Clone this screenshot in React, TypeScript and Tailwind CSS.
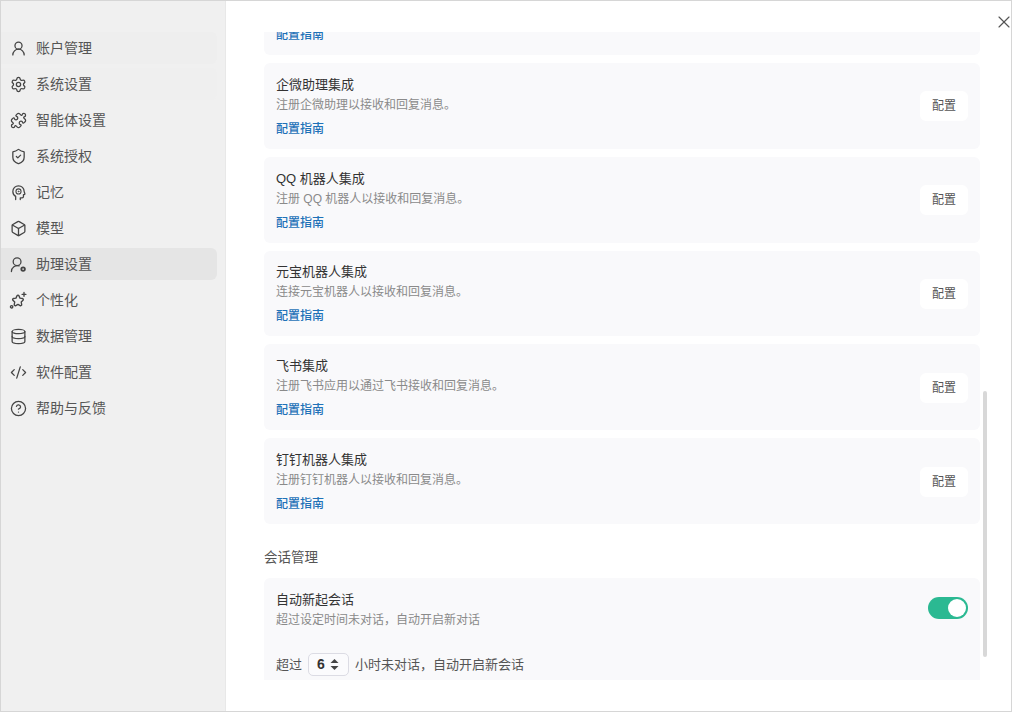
import { UserRound, Settings, Puzzle, ShieldCheck, Box, Database, CodeXml, CircleHelp, X } from 'lucide-react';

const HeadIcon = () => (
  <svg width="17" height="17" viewBox="0 0 24 24" fill="none" stroke="currentColor" strokeWidth="1.8" strokeLinecap="round" strokeLinejoin="round">
    <path d="M8 22v-4.5C5.5 16 4 13.5 4 10.5 4 6 7.6 2.5 12 2.5s8 3.5 8 8c0 .8.9 2.4 1 3.5 0 .6-.6 1-1.5 1H19v2.5a2 2 0 0 1-2 2h-2.5V22" />
    <circle cx="12" cy="10.5" r="3.6" strokeWidth="1.5" />
    <circle cx="12" cy="10.5" r="0.6" strokeWidth="1.2" />
  </svg>
);

const AssistantIcon = () => (
  <svg width="17" height="17" viewBox="0 0 24 24" fill="none" stroke="currentColor" strokeWidth="1.8" strokeLinecap="round" strokeLinejoin="round">
    <circle cx="10" cy="8" r="5.5" />
    <path d="M2 22a8.5 8.5 0 0 1 11-8" />
    <circle cx="18.5" cy="18.5" r="2.5" strokeWidth="2.6" />
  </svg>
);

const SparkIcon = () => (
  <svg width="18" height="18" viewBox="0 0 24 24" fill="none" stroke="currentColor" strokeWidth="1.8" strokeLinecap="round" strokeLinejoin="round">
    <path d="M12 5.5c.6 0 1 .4 1.3 1l1.3 3 3.3.5c1.2.2 1.6 1.5.8 2.3l-2.4 2.4.6 3.3c.2 1.2-1.1 2-2.1 1.5L12 17.8l-2.9 1.7c-1 .5-2.3-.3-2.1-1.5l.6-3.3-2.4-2.4c-.8-.8-.4-2.1.8-2.3l3.3-.5 1.3-3c.3-.6.7-1 1.4-1z" />
    <path d="M20 2v5M17.5 4.5h5" />
    <circle cx="3.5" cy="21" r="1.6" />
  </svg>
);

const nav = [
  { label: '账户管理', icon: <UserRound size={17} strokeWidth={1.8} />, bg: 'bg-[#eeeeee]' },
  { label: '系统设置', icon: <Settings size={17} strokeWidth={1.8} />, bg: 'bg-[#efefef]' },
  { label: '智能体设置', icon: <Puzzle size={17} strokeWidth={1.8} />, bg: '' },
  { label: '系统授权', icon: <ShieldCheck size={17} strokeWidth={1.8} />, bg: '' },
  { label: '记忆', icon: <HeadIcon />, bg: '' },
  { label: '模型', icon: <Box size={17} strokeWidth={1.8} />, bg: '' },
  { label: '助理设置', icon: <AssistantIcon />, bg: 'bg-[#e5e5e5]' },
  { label: '个性化', icon: <SparkIcon />, bg: '' },
  { label: '数据管理', icon: <Database size={17} strokeWidth={1.8} />, bg: '' },
  { label: '软件配置', icon: <CodeXml size={17} strokeWidth={1.8} />, bg: '' },
  { label: '帮助与反馈', icon: <CircleHelp size={17} strokeWidth={1.8} />, bg: '' },
];

const integrations = [
  { title: '企微助理集成', desc: '注册企微助理以接收和回复消息。' },
  { title: 'QQ 机器人集成', desc: '注册 QQ 机器人以接收和回复消息。' },
  { title: '元宝机器人集成', desc: '连接元宝机器人以接收和回复消息。' },
  { title: '飞书集成', desc: '注册飞书应用以通过飞书接收和回复消息。' },
  { title: '钉钉机器人集成', desc: '注册钉钉机器人以接收和回复消息。' },
];

const IntegrationCard = ({ title, desc }: { title: string; desc: string }) => (
  <div className="flex h-[85.8px] items-center justify-between rounded-md bg-[#f9f9fb] px-3">
    <div className="flex flex-col pt-[2px]">
      <div className="text-[13px] leading-[18px] text-[#333333]">{title}</div>
      <div className="mt-[2px] text-xs leading-[18px] text-[#8a8a8a]">{desc}</div>
      <a className="mt-[6px] text-xs leading-[18px] font-medium text-[#1f72b8]">配置指南</a>
    </div>
    <button className="mt-px h-[30px] w-12 rounded-md bg-white text-xs text-[#555555]">配置</button>
  </div>
);

export default function App() {
  return (
    <div
      className="relative flex h-[712px] w-[1012px] overflow-hidden border border-[#d6d6d6] bg-white"
      style={{ fontFamily: '"Liberation Sans", "Noto Sans CJK SC", sans-serif' }}
    >
      {/* Sidebar */}
      <aside className="flex w-[225px] shrink-0 flex-col gap-1 border-r border-[#e8e8e8] bg-[#f0f0f0] pt-[31px] pr-2">
        {nav.map((item) => (
          <div key={item.label} className={`flex h-8 items-center gap-[10px] rounded-r-md pl-[8px] text-sm text-[#555555] ${item.bg}`}>
            <span className="flex w-[18px] justify-center text-[#444444]">{item.icon}</span>
            <span className="-ml-px">{item.label}</span>
          </div>
        ))}
      </aside>

      {/* Content */}
      <main className="flex min-w-0 flex-1 flex-col pt-[31px] pb-[31px]">
        <div className="h-full overflow-hidden pr-[31px] pl-[38px]">
          <div className="-mt-[63px] flex flex-col gap-2">
            <div className="flex h-[86px] items-end rounded-md bg-[#f9f9fb] px-3 pb-[11px]">
              <a className="text-xs leading-[18px] font-medium text-[#1f72b8]">配置指南</a>
            </div>
            {integrations.map((item) => (
              <IntegrationCard key={item.title} {...item} />
            ))}
          </div>

          <div className="mt-[25px] text-[13.5px] leading-[18px] text-[#555555]">会话管理</div>

          <div className="mt-[11px] h-[110px] rounded-t-md bg-[#f9f9fb] px-3 pt-[13px]">
            <div className="flex items-center justify-between">
              <div>
                <div className="text-[13px] leading-[18px] text-[#333333]">自动新起会话</div>
                <div className="mt-[2px] text-xs leading-[18px] text-[#8a8a8a]">超过设定时间未对话，自动开启新对话</div>
              </div>
              <div className="-mt-[3px] flex h-[22px] w-10 items-center justify-end rounded-full bg-[#2bb992] px-[2px]">
                <span className="size-[18px] rounded-full bg-white" />
              </div>
            </div>
            <div className="mt-[24px] flex items-center text-[13px] text-[#555555]">
              <span>超过</span>
              <span className="mx-[6px] flex h-[23px] w-[41px] items-center justify-center gap-[4px] rounded-[5px] border border-[#dcdce4] bg-[#fbfbfd]">
                <span className="text-sm font-bold text-[#333333]">6</span>
                <svg width="11" height="13" viewBox="0 0 11 13" fill="#444444">
                  <path d="M5.5 1 9.5 5H1.5zM5.5 12 9.5 8H1.5z" />
                </svg>
              </span>
              <span>小时未对话，自动开启新会话</span>
            </div>
          </div>
        </div>
      </main>

      {/* Scrollbar + close */}
      <div className="absolute top-[390px] right-[24px] h-[266px] w-1 rounded-full bg-[#d8d8d8]" />
      <X className="absolute top-[11px] right-[-3px] text-[#555555]" size={20} strokeWidth={1.4} />
    </div>
  );
}
